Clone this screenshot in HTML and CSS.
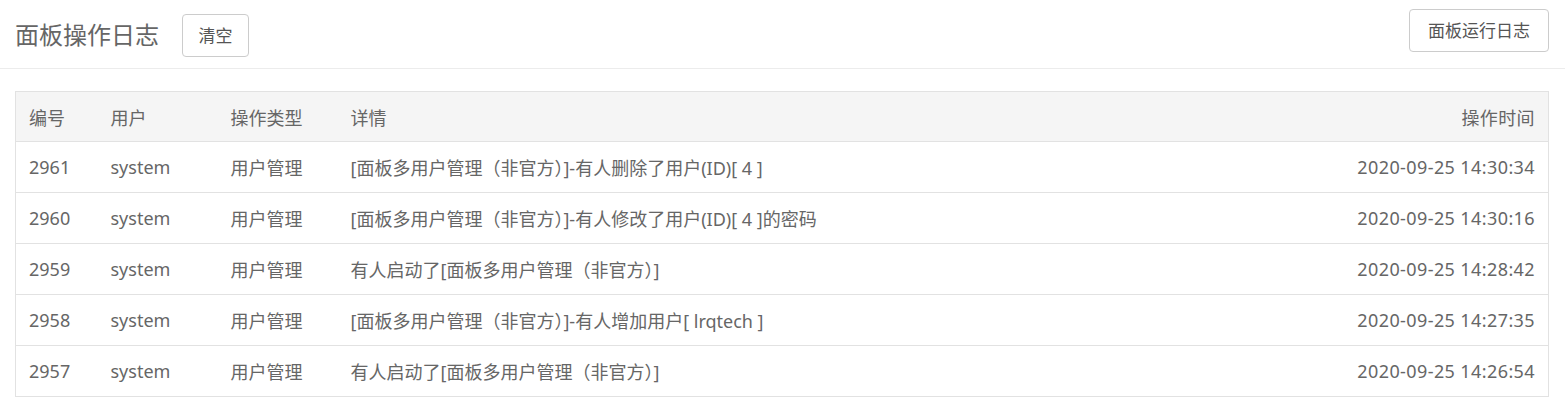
FILE: index.html
```html
<!DOCTYPE html>
<html lang="zh-CN">
<head>
<meta charset="utf-8">
<title>面板操作日志</title>
<link rel="stylesheet" href="styles.css">
</head>
<body>
<div class="topbar">
  <div class="left">
    <h1 class="title">面板操作日志</h1>
    <button class="btn btn-clear">清空</button>
  </div>
  <button class="btn btn-run">面板运行日志</button>
</div>
<div class="content">
  <table class="log-table">
    <thead>
      <tr>
        <th class="c-id">编号</th>
        <th class="c-user">用户</th>
        <th class="c-type">操作类型</th>
        <th class="c-detail">详情</th>
        <th class="c-time">操作时间</th>
      </tr>
    </thead>
    <tbody>
      <tr><td>2961</td><td>system</td><td>用户管理</td><td>[面板多用户管理（非官方）]-有人删除了用户(ID)[ 4 ]</td><td class="c-time">2020-09-25 14:30:34</td></tr>
      <tr><td>2960</td><td>system</td><td>用户管理</td><td>[面板多用户管理（非官方）]-有人修改了用户(ID)[ 4 ]的密码</td><td class="c-time">2020-09-25 14:30:16</td></tr>
      <tr><td>2959</td><td>system</td><td>用户管理</td><td>有人启动了[面板多用户管理（非官方）]</td><td class="c-time">2020-09-25 14:28:42</td></tr>
      <tr><td>2958</td><td>system</td><td>用户管理</td><td>[面板多用户管理（非官方）]-有人增加用户[ lrqtech ]</td><td class="c-time">2020-09-25 14:27:35</td></tr>
      <tr><td>2957</td><td>system</td><td>用户管理</td><td>有人启动了[面板多用户管理（非官方）]</td><td class="c-time">2020-09-25 14:26:54</td></tr>
    </tbody>
  </table>
</div>
</body>
</html>
```

FILE: styles.css
```css
* { box-sizing: border-box; }
html, body {
  margin: 0;
  padding: 0;
  background: #fff;
  color: #666;
  font-family: "Noto Sans", "Noto Sans CJK SC", sans-serif;
  overflow: hidden;
}
.topbar {
  height: 69px;
  border-bottom: 1px solid #ececec;
  display: flex;
  align-items: center;
  justify-content: space-between;
  padding: 0 16px 0 15px;
}
.left {
  display: flex;
  align-items: center;
  gap: 23px;
  padding-top: 1px;
}
.title {
  margin: 0;
  font-size: 24px;
  font-weight: normal;
  color: #666;
  line-height: 1;
}
.btn {
  font-family: inherit;
  font-size: 17px;
  color: #555;
  background: #fff;
  border: 1px solid #ccc;
  border-radius: 4px;
  height: 43px;
  padding: 0 15px;
  line-height: 1;
}
.btn-clear { width: 67px; margin-top: 2px; }
.btn-run { width: 140px; margin-top: -8px; }
.content {
  padding: 22px 16px 0 15px;
}
.log-table {
  width: 100%;
  border-collapse: collapse;
  border: 1px solid #e2e2e2;
  font-size: 18px;
  color: #666;
}
.log-table th {
  background: #f5f5f5;
  font-weight: normal;
  text-align: left;
  height: 50px;
  padding: 0 13px;
  border-bottom: 1px solid #e2e2e2;
}
.log-table td {
  height: 51px;
  padding: 0 13px;
  border-top: 1px solid #e2e2e2;
  white-space: nowrap;
}
.c-id { width: 82px; }
.c-user { width: 120px; }
.c-type { width: 120px; }
.log-table .c-time { text-align: right; letter-spacing: 0.4px; }
```
